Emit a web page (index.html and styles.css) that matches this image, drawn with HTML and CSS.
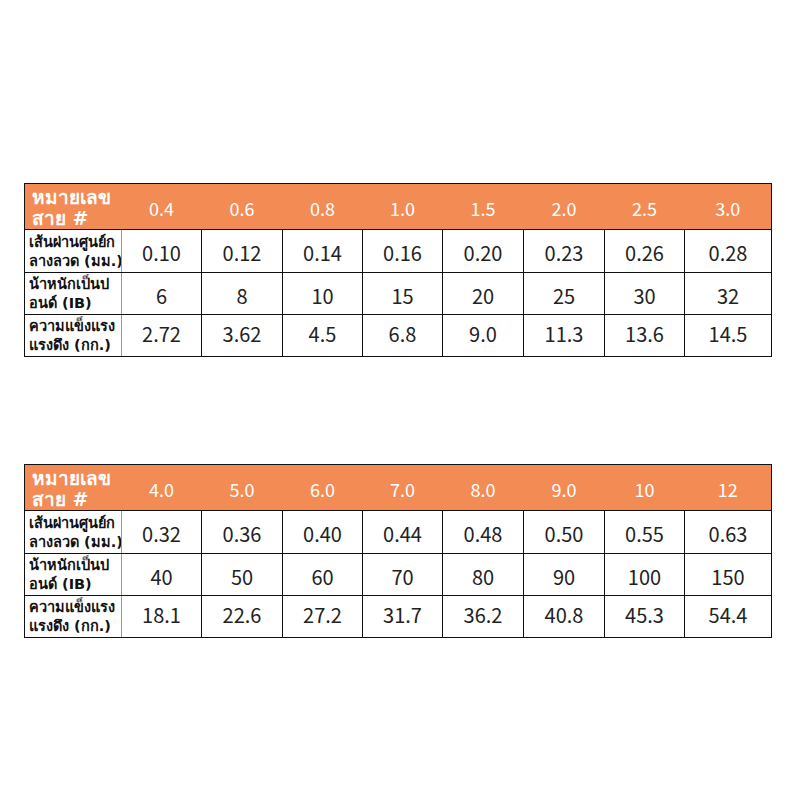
FILE: index.html
```html
<!DOCTYPE html>
<html lang="th">
<head>
<meta charset="utf-8">
<link rel="stylesheet" href="styles.css">
</head>
<body>
<div class="page">
  <table class="spec">
    <colgroup>
      <col class="c-label"><col class="c80"><col class="c81"><col class="c80"><col class="c80"><col class="c81"><col class="c81"><col class="c80"><col class="c87">
    </colgroup>
    <tr class="head">
      <th class="label">หมายเลข<br>สาย #</th>
      <th>0.4</th><th>0.6</th><th>0.8</th><th>1.0</th><th>1.5</th><th>2.0</th><th>2.5</th><th>3.0</th>
    </tr>
    <tr class="r1">
      <td class="label">เส้นผ่านศูนย์ก<br>ลางลวด (มม.)</td>
      <td>0.10</td><td>0.12</td><td>0.14</td><td>0.16</td><td>0.20</td><td>0.23</td><td>0.26</td><td>0.28</td>
    </tr>
    <tr class="r2">
      <td class="label">น้าหนักเป็นป<br>อนด์ (IB)</td>
      <td>6</td><td>8</td><td>10</td><td>15</td><td>20</td><td>25</td><td>30</td><td>32</td>
    </tr>
    <tr class="r3">
      <td class="label">ความแข็งแรง<br>แรงดึง (กก.)</td>
      <td>2.72</td><td>3.62</td><td>4.5</td><td>6.8</td><td>9.0</td><td>11.3</td><td>13.6</td><td>14.5</td>
    </tr>
  </table>

  <table class="spec">
    <colgroup>
      <col class="c-label"><col class="c80"><col class="c81"><col class="c80"><col class="c80"><col class="c81"><col class="c81"><col class="c80"><col class="c87">
    </colgroup>
    <tr class="head">
      <th class="label">หมายเลข<br>สาย #</th>
      <th>4.0</th><th>5.0</th><th>6.0</th><th>7.0</th><th>8.0</th><th>9.0</th><th>10</th><th>12</th>
    </tr>
    <tr class="r1">
      <td class="label">เส้นผ่านศูนย์ก<br>ลางลวด (มม.)</td>
      <td>0.32</td><td>0.36</td><td>0.40</td><td>0.44</td><td>0.48</td><td>0.50</td><td>0.55</td><td>0.63</td>
    </tr>
    <tr class="r2">
      <td class="label">น้าหนักเป็นป<br>อนด์ (IB)</td>
      <td>40</td><td>50</td><td>60</td><td>70</td><td>80</td><td>90</td><td>100</td><td>150</td>
    </tr>
    <tr class="r3">
      <td class="label">ความแข็งแรง<br>แรงดึง (กก.)</td>
      <td>18.1</td><td>22.6</td><td>27.2</td><td>31.7</td><td>36.2</td><td>40.8</td><td>45.3</td><td>54.4</td>
    </tr>
  </table>
</div>
</body>
</html>
```

FILE: styles.css
```css
html, body {
  margin: 0;
  padding: 0;
  background: #ffffff;
}

.page {
  display: flex;
  flex-direction: column;
  gap: 107px;
  padding: 183px 0 0 24px;
}

.spec {
  border-collapse: collapse;
  table-layout: fixed;
  width: 748px;
  border: 1px solid #111;
  font-family: "Noto Sans CJK SC", "Noto Sans", sans-serif;
}

.c-label { width: 97px; }
.c80 { width: 80px; }
.c81 { width: 81px; }
.c87 { width: 87px; }

.spec th,
.spec td {
  padding: 0;
  text-align: center;
  vertical-align: middle;
}

.spec td {
  border: 1px solid #111;
  font-size: 20px;
  line-height: 24px;
  color: #222;
}

.head {
  background: #f38b55;
  height: 46px;
}

.head th {
  color: #fff;
  font-weight: 400;
  font-size: 18px;
  line-height: 22px;
  border-bottom: 1px solid #111;
  padding-top: 2px;
}

.head th.label {
  text-align: left;
  font-weight: 700;
  font-size: 19px;
  line-height: 21px;
  padding: 2px 0 0 7px;
  white-space: nowrap;
  font-family: Tahoma, "DejaVu Sans", "Noto Sans", sans-serif;
}

.r1 { height: 43px; }
.r2 { height: 42px; }
.r3 { height: 42px; }

.r1 td { padding-top: 4px; }
.r2 td { padding-top: 5px; }
.r3 td { padding-bottom: 3px; }

.spec td.label {
  text-align: left;
  font-weight: 700;
  font-size: 14.5px;
  line-height: 19px;
  color: #111;
  padding: 1px 0 0 4px;
  white-space: nowrap;
  overflow: hidden;
  border-right: 1px solid #999;
  font-family: Tahoma, "DejaVu Sans", "Noto Sans", sans-serif;
}
```
